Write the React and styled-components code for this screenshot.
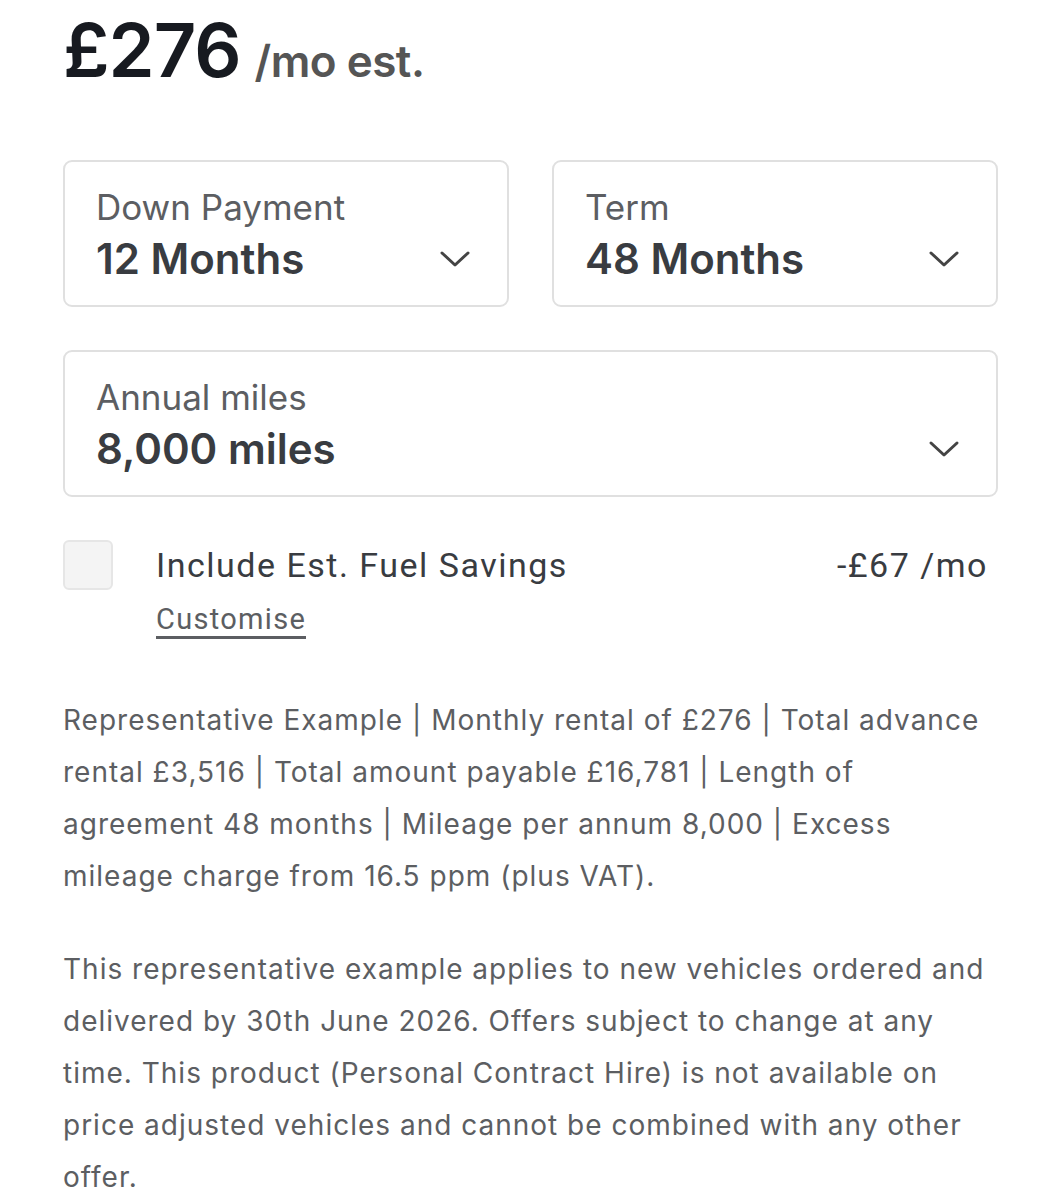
import React from 'react'
import styled, { createGlobalStyle } from 'styled-components'

const GlobalStyle = createGlobalStyle`
  body {
    margin: 0;
    background: #ffffff;
    font-family: Inter, "Noto Sans", sans-serif;
    -webkit-font-smoothing: antialiased;
  }
`

const ChevronDown = () => (
  <svg width="32" height="20" viewBox="0 0 32 20" fill="none">
    <path d="M3 4 L16 16 L29 4" stroke="#444" strokeWidth="3" strokeLinecap="round" strokeLinejoin="round" />
  </svg>
)

function Select({ label, value }) {
  return (
    <SelectBox>
      <div>
        <SelectLabel>{label}</SelectLabel>
        <SelectValue>{value}</SelectValue>
      </div>
      <Chevron><ChevronDown /></Chevron>
    </SelectBox>
  )
}

function App() {
  return (
    <Page>
      <GlobalStyle />
      <Price>
        £276<PriceUnit>/mo est.</PriceUnit>
      </Price>

      <SelectGrid>
        <Select label="Down Payment" value="12 Months" />
        <Select label="Term" value="48 Months" />
        <Wide>
          <Select label="Annual miles" value="8,000 miles" />
        </Wide>
      </SelectGrid>

      <SavingsRow>
        <Checkbox />
        <SavingsText>
          <SavingsLabel>Include Est. Fuel Savings</SavingsLabel>
          <CustomiseLink href="#">Customise</CustomiseLink>
        </SavingsText>
        <SavingsAmount>-£67 /mo</SavingsAmount>
      </SavingsRow>

      <Disclaimers>
        <Disclaimer>
          Representative Example | Monthly rental of £276 | Total advance rental £3,516 | Total amount payable £16,781 | Length of agreement 48 months | Mileage per annum 8,000 | Excess mileage charge from 16.5 ppm (plus VAT).
        </Disclaimer>
        <Disclaimer>
          This representative example applies to new vehicles ordered and delivered by 30th June 2026. Offers subject to change at any time. This product (Personal Contract Hire) is not available on price adjusted vehicles and cannot be combined with any other offer.
        </Disclaimer>
      </Disclaimers>
    </Page>
  )
}

const Page = styled.div`
  width: 935px;
  padding: 0 0 0 63px;
`

const Price = styled.div`
  font-size: 74px;
  font-weight: 600;
  color: #171a20;
  letter-spacing: -1px;
  line-height: 100px;
  display: flex;
  align-items: baseline;
`

const PriceUnit = styled.span`
  font-size: 44px;
  font-weight: 600;
  color: #555;
  letter-spacing: -0.5px;
  margin-left: 14px;
`

const SelectGrid = styled.div`
  margin-top: 49px;
  display: grid;
  grid-template-columns: 1fr 1fr;
  column-gap: 43px;
  row-gap: 43px;
`

const Wide = styled.div`
  grid-column: 1 / 3;
`

const SelectBox = styled.div`
  height: 147px;
  box-sizing: border-box;
  border: 2px solid #e0e0e0;
  border-radius: 9px;
  padding: 0 26px 0 31px;
  display: flex;
  align-items: center;
  justify-content: space-between;
`

const SelectLabel = styled.div`
  font-size: 35px;
  color: #5c5e62;
  line-height: 50px;
`

const SelectValue = styled.div`
  font-size: 42px;
  font-weight: 600;
  color: #393c41;
  line-height: 54px;
`

const Chevron = styled.div`
  display: flex;
  margin-top: 50px;
  margin-right: 10px;
`

const SavingsRow = styled.div`
  margin-top: 43px;
  display: flex;
  align-items: flex-start;
  padding-right: 10px;
`

const Checkbox = styled.div`
  width: 50px;
  height: 50px;
  box-sizing: border-box;
  background: #f4f4f4;
  border: 2px solid #e6e6e6;
  border-radius: 6px;
  flex-shrink: 0;
`

const SavingsText = styled.div`
  margin-left: 43px;
  flex: 1;
  display: flex;
  flex-direction: column;
  align-items: flex-start;
`

const SavingsLabel = styled.div`
  font-family: Roboto, sans-serif;
  font-size: 34px;
  letter-spacing: 1.5px;
  color: #393c41;
  line-height: 50px;
`

const CustomiseLink = styled.a`
  font-family: Roboto, sans-serif;
  font-size: 29px;
  letter-spacing: 1.3px;
  color: #5c5e62;
  text-decoration: none;
  border-bottom: 3px solid #5c5e62;
  line-height: 34px;
  margin-top: 12px;
`

const SavingsAmount = styled.div`
  font-family: Roboto, sans-serif;
  font-size: 34px;
  letter-spacing: 1.5px;
  color: #393c41;
  line-height: 50px;
`

const Disclaimers = styled.div`
  margin-top: 55px;
  display: flex;
  flex-direction: column;
  gap: 41px;
`

const Disclaimer = styled.p`
  margin: 0;
  font-size: 28px;
  letter-spacing: 1px;
  line-height: 52px;
  color: #5c5e62;
`

export default App
